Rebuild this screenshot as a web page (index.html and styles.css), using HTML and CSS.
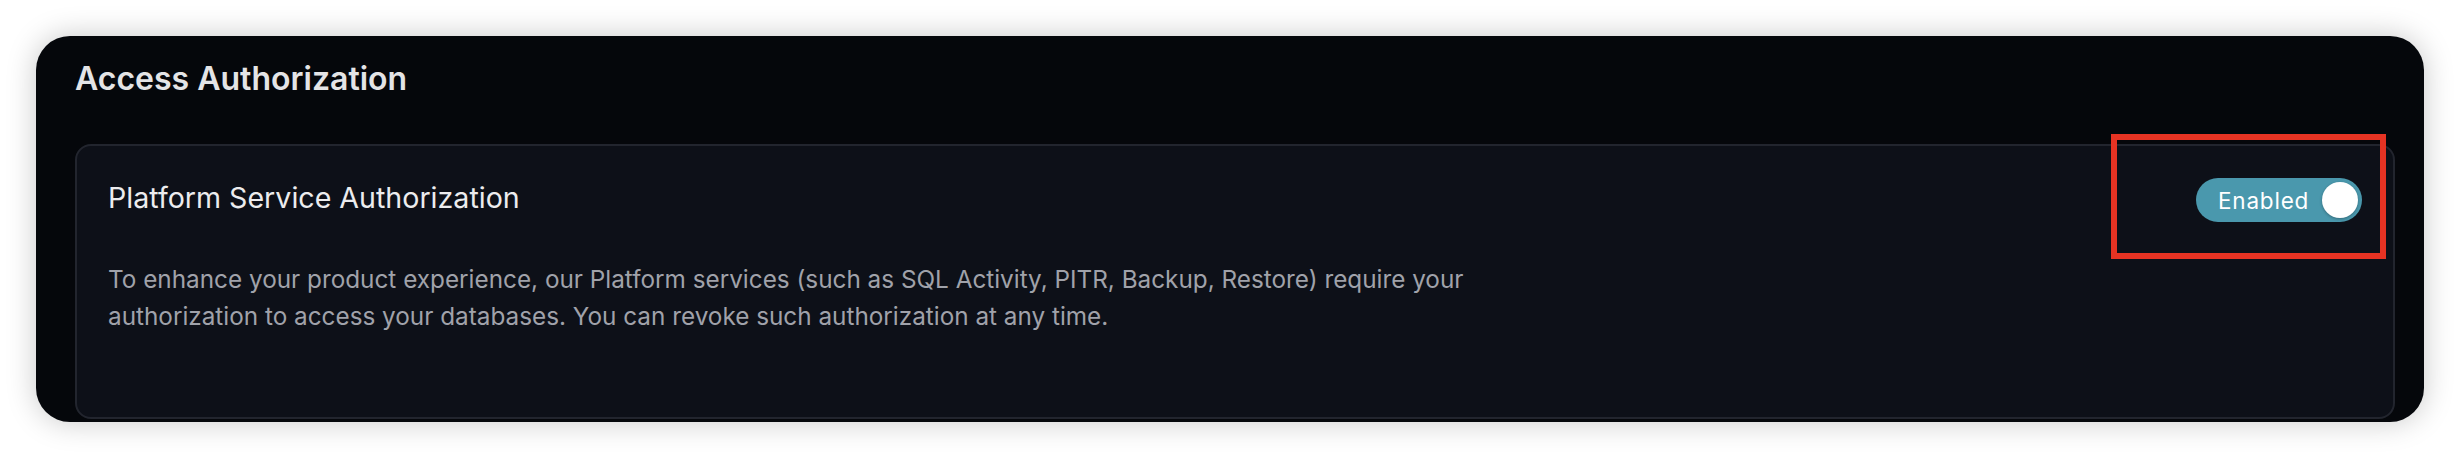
FILE: index.html
```html
<!DOCTYPE html>
<html lang="en">
  <head>
    <meta charset="utf-8" />
    <title>Access Authorization</title>
    <link rel="stylesheet" href="styles.css">
  </head>

  <body>
    <div class="page">
      <section class="panel">
        <h2 class="panel_title">Access Authorization</h2>

        <div class="setting">
          <div class="setting_head">
            <h3 class="setting_title">Platform Service Authorization</h3>
            <div class="toggle_wrap">
              <button class="toggle on" title="Toggle authorization">
                <span class="toggle_label">Enabled</span>
                <span class="toggle_knob"></span>
              </button>
              <div class="highlight"></div>
            </div>
          </div>
          <p class="setting_desc">To enhance your product experience, our Platform services (such as SQL Activity, PITR, Backup, Restore) require your authorization to access your databases. You can revoke such authorization at any time.</p>
        </div>
      </section>
    </div>
  </body>
</html>
```

FILE: styles.css
```css
html, body
{
  margin: 0;
  padding: 0;
  background-color: #fff;
  width: 100%;
  height: 100%;
  overflow: hidden;
  font-family: Inter, Lato, sans-serif;
}
.page
{
  padding: 36px 36px 0 36px;
}
.panel
{
  height: 386px;
  box-sizing: border-box;
  padding: 23px 29px 3px 39px;
  background-color: #05070b;
  border-radius: 34px;
  box-shadow: 0 0 30px rgba(0, 0, 0, 0.22);
  display: flex;
  flex-direction: column;
}
.panel_title
{
  margin: 0 0 45px 0;
  font-size: 32px;
  line-height: 40px;
  font-weight: 600;
  color: #e4e4e6;
}
.setting
{
  flex: 1;
  background-color: #0d1018;
  border: 2px solid #22252e;
  border-radius: 16px;
  padding: 0 31px 0 31px;
}
.setting_head
{
  display: flex;
  align-items: center;
  justify-content: space-between;
  padding-top: 32px;
}
.setting_title
{
  margin: 0 0 4px 0;
  font-size: 28.6px;
  line-height: 34px;
  font-weight: 400;
  color: #ececee;
}
.setting_desc
{
  margin: 39px 0 0 0;
  max-width: 1400px;
  font-size: 24.3px;
  line-height: 37px;
  color: #a0a2aa;
}
.toggle_wrap
{
  position: relative;
}
.toggle
{
  display: flex;
  align-items: center;
  width: 166px;
  height: 44px;
  padding: 0 4px 0 22px;
  box-sizing: border-box;
  border: none;
  border-radius: 22px;
  background-color: #4a98ad;
  cursor: pointer;
  font-family: inherit;
}
.toggle_label
{
  font-size: 22.5px;
  letter-spacing: 0.8px;
  color: #fff;
}
.toggle_knob
{
  width: 36px;
  height: 36px;
  border-radius: 50%;
  background-color: #fff;
  margin-left: auto;
  box-shadow: 0 1px 3px rgba(0, 0, 0, 0.3);
}
.highlight
{
  position: absolute;
  left: -85px;
  top: -44px;
  width: 275px;
  height: 125px;
  box-sizing: border-box;
  border: 6px solid #e63323;
}
```
